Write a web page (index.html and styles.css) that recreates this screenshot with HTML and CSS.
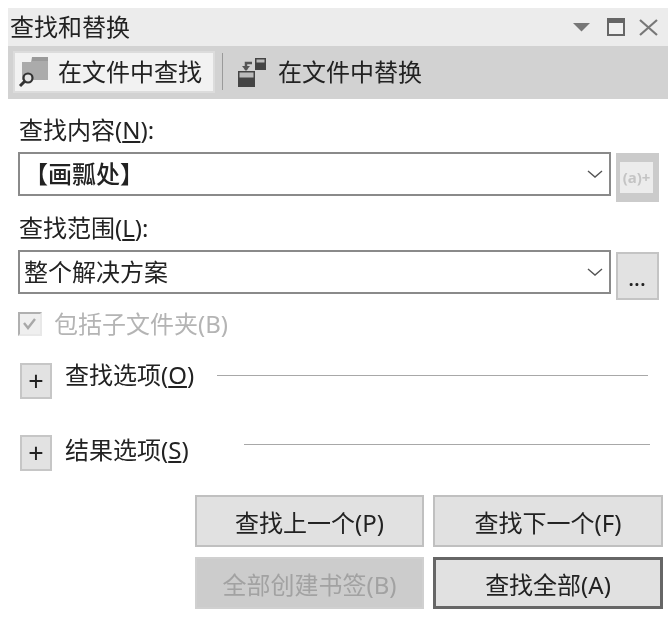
FILE: index.html
```html
<!DOCTYPE HTML>
<html>
  <head>
    <title>查找和替换</title>
    <link rel="stylesheet" href="styles.css">
  </head>
  <body>
    <div class="panel">
      <div class="titlebar">
        <span class="title">查找和替换</span>
        <div class="window-icons">
          <svg class="icon-arrow" width="17" height="9" viewBox="0 0 17 9"><path d="M0 0h17L8.500 8.500z" fill="#777"/></svg>
          <svg class="icon-max" width="18" height="18" viewBox="0 0 18 18"><rect x="1" y="1" width="16" height="16" fill="#f0f0f0" stroke="#666" stroke-width="2"/><rect x="1" y="1" width="16" height="4" fill="#666"/></svg>
          <svg width="19" height="17" viewBox="0 0 19 17"><path d="M1 1l17 15M18 1L1 16" stroke="#777" stroke-width="2.2" fill="none"/></svg>
        </div>
      </div>

      <div class="tabs">
        <div class="tab active">
          <svg width="30" height="30" viewBox="0 0 30 30">
            <path d="M5 5H14L15 0H31V23H5z" fill="#ababab"/>
            <path d="M15 0H31V4H15z" fill="#9a9a9a"/>
            <path d="M8 24L3 29" stroke="#333" stroke-width="3"/>
            <circle cx="11" cy="21" r="4.500" fill="#e4e4e4" stroke="#333" stroke-width="2.200"/>
          </svg>
          <span>在文件中查找</span>
        </div>
        <div class="tab-sep"></div>
        <div class="tab">
          <svg width="30" height="30" viewBox="0 0 30 30">
            <rect x="2" y="14" width="17" height="16" fill="#444"/>
            <rect x="3.500" y="15.500" width="14" height="5" fill="#bbb"/>
            <rect x="19" y="1" width="11" height="12" fill="#444"/>
            <rect x="20.500" y="2.500" width="8" height="3" fill="#bbb"/>
            <path d="M16 6H10V13" stroke="#555" stroke-width="2.500" fill="none"/>
            <path d="M6 9l4 5 4-5z" fill="#555"/>
          </svg>
          <span>在文件中替换</span>
        </div>
      </div>

      <div class="body">
        <label class="field-label">查找内容(<u>N</u>):</label>
        <div class="field-row">
          <div class="combo">
            <span class="strong">【画瓢处】</span>
            <svg class="chev" width="16" height="8" viewBox="0 0 16 8"><path d="M1 1l7 6 7-6" stroke="#555" stroke-width="1.4" fill="none"/></svg>
          </div>
          <div class="side-btn disabled"><span>(a)+</span></div>
        </div>

        <label class="field-label second">查找范围(<u>L</u>):</label>
        <div class="field-row">
          <div class="combo">
            <span>整个解决方案</span>
            <svg class="chev" width="16" height="8" viewBox="0 0 16 8"><path d="M1 1l7 6 7-6" stroke="#555" stroke-width="1.4" fill="none"/></svg>
          </div>
          <div class="side-btn dots">...</div>
        </div>

        <div class="check-row">
          <div class="checkbox">
            <svg width="16" height="16" viewBox="0 0 16 16"><path d="M2 7l4 5 7-9" stroke="#a8a8a8" stroke-width="2.400" fill="none"/></svg>
          </div>
          <span>包括子文件夹(B)</span>
        </div>

        <div class="expander first">
          <div class="plus">+</div>
          <span class="exp-text">查找选项(<u>O</u>)</span>
          <div class="exp-line"></div>
        </div>
        <div class="expander last">
          <div class="plus">+</div>
          <span class="exp-text lower">结果选项(<u>S</u>)</span>
          <div class="exp-line wide"></div>
        </div>

        <div class="actions">
          <button>查找上一个(P)</button>
          <button>查找下一个(F)</button>
          <button disabled>全部创建书签(B)</button>
          <button class="default">查找全部(A)</button>
        </div>
      </div>
    </div>
  </body>
</html>
```

FILE: styles.css
```css
*{
  box-sizing:border-box;
}

html{
  background:white;
}

body{
  margin:0;
  background:white;
  color:#222;
  font-family:"Noto Sans","Noto Sans CJK SC",sans-serif;
  font-size:24px;
  filter:blur(0.6px);
}

.panel{
  width:660px;
  height:619px;
  margin-left:8px;
  padding-top:8px;
  overflow:hidden;
}

.titlebar{
  height:38px;
  background:#ececec;
  display:flex;
  align-items:center;
  justify-content:space-between;
  padding:0 10px 0 2px;
  line-height:30px;
}

.window-icons{
  display:flex;
  align-items:center;
  gap:14px;
}

.icon-arrow{
  margin-right:3px;
}

.tabs{
  height:53px;
  background:#d2d2d2;
  display:flex;
  align-items:flex-start;
  padding:5px 0 0 5px;
}

.tab{
  height:42px;
  display:flex;
  align-items:center;
  gap:12px;
  padding:0 11px 0 4px;
  line-height:30px;
}

.tab svg{
  overflow:visible;
}

.tab.active{
  width:202px;
  padding-left:2px;
  gap:11px;
  background:#f2f2f2;
  border:2px solid #dcdcdc;
}

.tab-sep{
  width:1px;
  height:37px;
  margin:2px 9px 0 7px;
  background:#9a9a9a;
}

.body{
  padding:17px 0 0 10px;
}

.field-label{
  display:block;
  height:36px;
  line-height:28px;
  padding-left:1px;
}

.field-label.second{
  margin-top:5px;
  height:43px;
  line-height:42px;
}

.field-row{
  display:flex;
  align-items:flex-start;
  gap:5px;
}

.combo{
  width:593px;
  height:44px;
  border:2px solid #8a8a8a;
  background:white;
  display:flex;
  align-items:center;
  justify-content:space-between;
  padding:0 6px 0 4px;
  line-height:30px;
}

.strong{
  font-weight:500;
}

.side-btn{
  width:43px;
  margin-top:1px;
  border:2px solid #c4c4c4;
  background:#e2e2e2;
  text-align:center;
}

.side-btn.disabled{
  height:49px;
  background:#ececec;
  border-style:solid;
  border-color:#cbcbcb;
  border-width:9px 6px 9px 4px;
  color:#c4c4c4;
  font-size:15px;
  font-weight:bold;
  line-height:30px;
}

.side-btn.disabled span{
  display:block;
  margin:0 -5px;
}

.side-btn.dots{
  height:48px;
  margin-top:2px;
  font-weight:bold;
  font-size:17px;
  line-height:52px;
  letter-spacing:1px;
}

.check-row{
  display:flex;
  align-items:center;
  gap:12px;
  height:24px;
  margin-top:12px;
  color:#b4b4b4;
  line-height:24px;
}

.checkbox{
  width:24px;
  height:24px;
  border:2px solid #b0b0b0;
  border-right-color:#e8e8e8;
  border-bottom-color:#e8e8e8;
  background:#efefef;
  display:flex;
  align-items:center;
  justify-content:center;
}

.expander{
  display:flex;
  align-items:flex-start;
  margin-left:2px;
}

.expander.first{
  margin-top:27px;
}

.expander.last{
  margin-top:36px;
}

.plus{
  width:32px;
  height:36px;
  border:2px solid #c6c6c6;
  background:#e2e2e2;
  text-align:center;
  font-size:27px;
  line-height:32px;
}

.exp-text{
  margin-left:13px;
  line-height:24px;
}

.exp-text.lower{
  margin-top:3px;
}

.exp-line{
  flex:1;
  height:1px;
  margin:12px 20px 0 23px;
  background:#a8a8a8;
}

.exp-line.wide{
  margin:9px 18px 0 55px;
}

.actions{
  display:grid;
  grid-template-columns:229px 230px;
  grid-auto-rows:52px;
  column-gap:9px;
  row-gap:10px;
  margin:24px 0 0 177px;
}

.actions button{
  font:inherit;
  color:#222;
  background:#e1e1e1;
  border:2px solid #c0c0c0;
  padding:0;
}

.actions button[disabled]{
  background:#cccccc;
  border-color:#d0d0d0;
  color:#a2a2a2;
}

.actions button.default{
  border:3px solid #666;
}
```
